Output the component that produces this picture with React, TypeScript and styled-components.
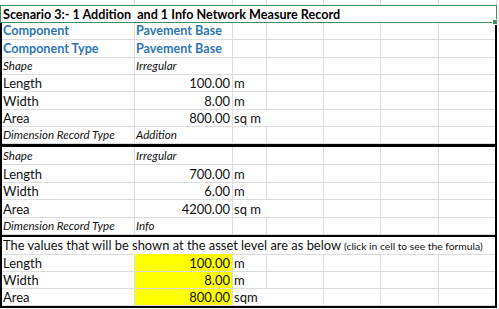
import { createGlobalStyle, styled } from 'styled-components';

const COLS = '133px 98px 34px 57px 57px 58px 56px';
const GRID = '#dcdcdc';

type Kind = 'plain' | 'blue' | 'note';

type RowData = {
  h: number;
  label: string;
  kind: Kind;
  value?: string;
  valueKind?: Kind;
  num?: boolean;
  unit?: string;
  fill?: boolean;
};

const sectionOne: RowData[] = [
  { h: 17, label: 'Component', kind: 'blue', value: 'Pavement Base', valueKind: 'blue' },
  { h: 18, label: 'Component Type', kind: 'blue', value: 'Pavement Base', valueKind: 'blue' },
  { h: 17, label: 'Shape', kind: 'note', value: 'Irregular', valueKind: 'note' },
  { h: 17, label: 'Length', kind: 'plain', value: '100.00', num: true, unit: 'm' },
  { h: 18, label: 'Width', kind: 'plain', value: '8.00', num: true, unit: 'm' },
  { h: 17, label: 'Area', kind: 'plain', value: '800.00', num: true, unit: 'sq m' },
  { h: 17, label: 'Dimension Record Type', kind: 'note', value: 'Addition', valueKind: 'note' },
];

const sectionTwo: RowData[] = [
  { h: 18, label: 'Shape', kind: 'note', value: 'Irregular', valueKind: 'note' },
  { h: 18, label: 'Length', kind: 'plain', value: '700.00', num: true, unit: 'm' },
  { h: 17, label: 'Width', kind: 'plain', value: '6.00', num: true, unit: 'm' },
  { h: 18, label: 'Area', kind: 'plain', value: '4200.00', num: true, unit: 'sq m' },
  { h: 16, label: 'Dimension Record Type', kind: 'note', value: 'Info', valueKind: 'note' },
];

const sectionThree: RowData[] = [
  { h: 18, label: 'Length', kind: 'plain', value: '100.00', num: true, unit: 'm', fill: true },
  { h: 17, label: 'Width', kind: 'plain', value: '8.00', num: true, unit: 'm', fill: true },
  { h: 17, label: 'Area', kind: 'plain', value: '800.00', num: true, unit: 'sqm', fill: true },
];

const SheetRow = ({ row }: { row: RowData }) => (
  <Row $h={row.h}>
    <Cell>
      <Text $kind={row.kind}>{row.label}</Text>
    </Cell>
    <Cell $right={row.num} $fill={row.fill}>
      {row.value && <Text $kind={row.valueKind ?? 'plain'}>{row.value}</Text>}
    </Cell>
    <Cell $spill={!!row.unit && row.unit.length > 1}>
      {row.unit && <Text $kind="plain">{row.unit}</Text>}
    </Cell>
    <Cell />
    <Cell />
    <Cell />
    <Cell $last />
  </Row>
);

const App = () => {
  return (
    <>
      <GlobalStyle />
      <Sheet>
        <TopStrip>
          <Tick />
          <Tick />
          <Tick />
          <Tick />
          <Tick />
          <Tick />
          <Tick />
        </TopStrip>
        <Header>
          Scenario 3:- 1 Addition&nbsp; and 1 Info Network Measure Record
          <FillHandle />
        </Header>
        <Table>
          {sectionOne.map((row, i) => (
            <SheetRow key={`a${i}`} row={row} />
          ))}
          <Rule />
          {sectionTwo.map((row, i) => (
            <SheetRow key={`b${i}`} row={row} />
          ))}
          <Rule />
          <Row $h={17}>
            <NoteCell>
              The values that will be shown at the asset level are as below <Small>(click in cell to see the formula)</Small>
            </NoteCell>
          </Row>
          {sectionThree.map((row, i) => (
            <SheetRow key={`c${i}`} row={row} />
          ))}
        </Table>
      </Sheet>
    </>
  );
};

export default App;

const GlobalStyle = createGlobalStyle`
  html, body {
    margin: 0;
    background: #ffffff;
  }
`;

const Sheet = styled.div`
  width: 499px;
  font-family: Lato, 'Open Sans', sans-serif;
  color: #111;
`;

const TopStrip = styled.div`
  display: grid;
  grid-template-columns: 135px 98px 34px 57px 57px 58px 58px;
  height: 5px;
`;

const Tick = styled.div`
  border-right: 1px solid ${GRID};
`;

const Header = styled.div`
  position: relative;
  box-sizing: border-box;
  display: flex;
  align-items: center;
  width: 497px;
  height: 18px;
  padding: 1px 0 0 2px;
  border: 1px solid #3f8d5c;
  font-size: 12.6px;
  font-weight: 700;
  white-space: nowrap;
  color: #000;
`;

const FillHandle = styled.span`
  position: absolute;
  right: -2px;
  bottom: -3px;
  width: 4px;
  height: 4px;
  background: #3f8d5c;
  border: 1px solid #fff;
`;

const Table = styled.div`
  box-sizing: border-box;
  width: 497px;
  border-left: 2px solid #000;
  border-right: 2px solid #000;
  border-bottom: 2px solid #000;
`;

const Row = styled.div<{ $h: number }>`
  display: grid;
  grid-template-columns: ${COLS};
  height: ${({ $h }) => $h}px;
`;

const Cell = styled.div<{ $right?: boolean; $fill?: boolean; $spill?: boolean; $last?: boolean }>`
  box-sizing: border-box;
  display: flex;
  align-items: flex-end;
  justify-content: ${({ $right }) => ($right ? 'flex-end' : 'flex-start')};
  padding: 0 2px 0 1px;
  overflow: visible;
  white-space: nowrap;
  background: ${({ $fill }) => ($fill ? '#ffff00' : 'transparent')};
  border-bottom: 1px solid ${GRID};
  border-right: ${({ $spill, $last }) => ($spill || $last ? 'none' : `1px solid ${GRID}`)};
  position: relative;
`;

const Text = styled.span<{ $kind: Kind }>`
  line-height: 16px;
  font-size: ${({ $kind }) => ($kind === 'note' ? '11.6px' : $kind === 'blue' ? '12.6px' : '13px')};
  font-style: ${({ $kind }) => ($kind === 'note' ? 'italic' : 'normal')};
  font-weight: ${({ $kind }) => ($kind === 'blue' ? 700 : 400)};
  color: ${({ $kind }) => ($kind === 'blue' ? '#2e75b6' : '#111')};
`;

const NoteCell = styled.div`
  grid-column: 1 / -1;
  display: flex;
  align-items: flex-end;
  gap: 3px;
  padding-left: 1px;
  font-size: 12.9px;
  line-height: 17px;
  white-space: nowrap;
  border-bottom: 1px solid ${GRID};
`;

const Small = styled.span`
  font-size: 10.3px;
  line-height: 15px;
`;

const Rule = styled.div`
  height: 3px;
  margin: 0 -2px;
  background: #000;
`;
